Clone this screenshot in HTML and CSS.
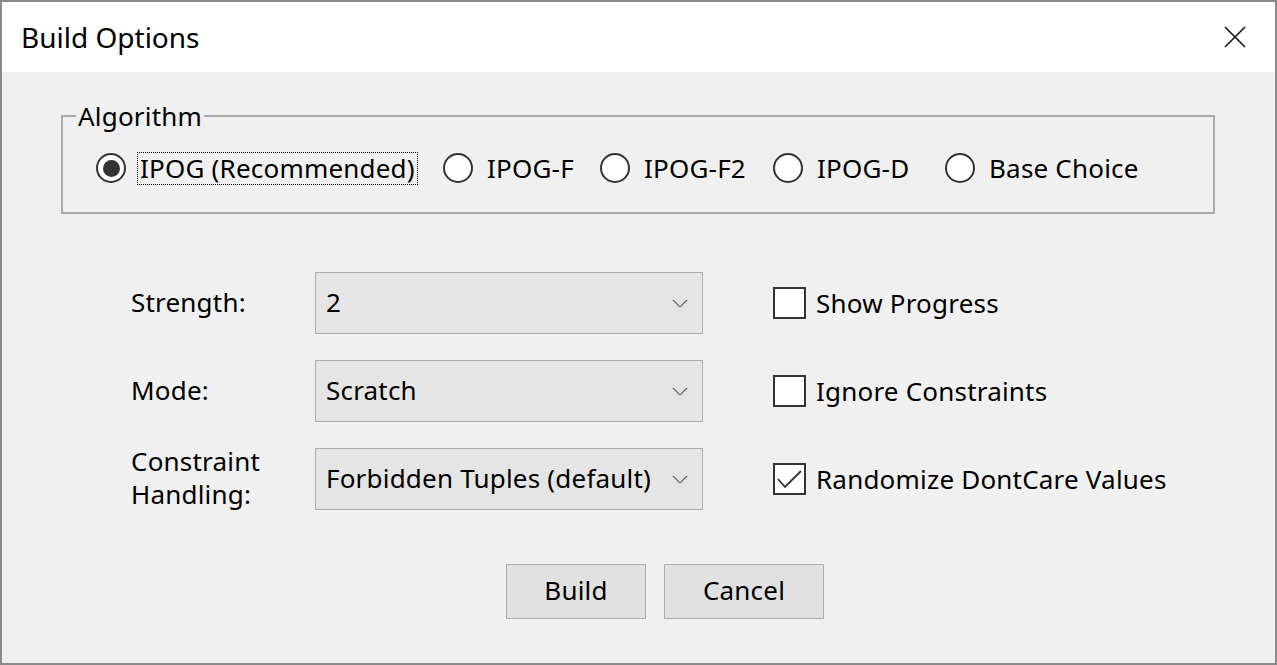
FILE: index.html
```html
<!DOCTYPE html>
<html>
<head>
<meta charset="utf-8">
<link rel="stylesheet" href="styles.css">
</head>
<body>
<div class="window">
  <div class="titlebar">
    <span class="title">Build Options</span>
    <svg class="close" width="22" height="22" viewBox="0 0 22 22"><path d="M1 1 L21 21 M21 1 L1 21" stroke="#111" stroke-width="1.6" fill="none"/></svg>
  </div>
  <div class="content">
    <fieldset class="group">
      <legend class="legend">Algorithm</legend>
      <div class="radios">
        <div class="radio r1"><span class="circle on"></span><span class="rlabel focus">IPOG (Recommended)</span></div>
        <div class="radio r2"><span class="circle"></span><span class="rlabel">IPOG-F</span></div>
        <div class="radio r3"><span class="circle"></span><span class="rlabel">IPOG-F2</span></div>
        <div class="radio r4"><span class="circle"></span><span class="rlabel">IPOG-D</span></div>
        <div class="radio r5"><span class="circle"></span><span class="rlabel">Base Choice</span></div>
      </div>
    </fieldset>
    <div class="form">
      <div class="flabel">Strength:</div>
      <div class="combo"><span>2</span><svg class="chev" width="16" height="9" viewBox="0 0 16 9"><path d="M1 1 L8 8 L15 1" stroke="#666" stroke-width="1.2" fill="none"/></svg></div>
      <div class="check"><span class="box"></span><span>Show Progress</span></div>

      <div class="flabel">Mode:</div>
      <div class="combo"><span>Scratch</span><svg class="chev" width="16" height="9" viewBox="0 0 16 9"><path d="M1 1 L8 8 L15 1" stroke="#666" stroke-width="1.2" fill="none"/></svg></div>
      <div class="check"><span class="box"></span><span>Ignore Constraints</span></div>

      <div class="flabel two">Constraint<br>Handling:</div>
      <div class="combo"><span>Forbidden Tuples (default)</span><svg class="chev" width="16" height="9" viewBox="0 0 16 9"><path d="M1 1 L8 8 L15 1" stroke="#666" stroke-width="1.2" fill="none"/></svg></div>
      <div class="check"><span class="box"><svg width="29" height="29" viewBox="0 0 29 29"><path d="M3 14 L10 22 L26 6" stroke="#333" stroke-width="1.8" fill="none"/></svg></span><span>Randomize DontCare Values</span></div>
    </div>
    <div class="buttons">
      <div class="btn b-build">Build</div>
      <div class="btn b-cancel">Cancel</div>
    </div>
  </div>
</div>
</body>
</html>
```

FILE: styles.css
```css
html, body {
  margin: 0;
  padding: 0;
}
body {
  width: 1277px;
  height: 665px;
  overflow: hidden;
  font-family: "Noto Sans", "Open Sans", sans-serif;
  font-size: 26px;
  letter-spacing: 0.2px;
  color: #000;
  background: #f0f0f0;
}
.window {
  box-sizing: border-box;
  width: 1277px;
  height: 665px;
  border: 2px solid #8a8a8a;
  display: flex;
  flex-direction: column;
  background: #f0f0f0;
}
.titlebar {
  height: 70px;
  flex: none;
  background: #fff;
  display: flex;
  align-items: center;
  justify-content: space-between;
  padding: 0 29px 0 19px;
}
.title {
  font-size: 28px;
  line-height: 30px;
  letter-spacing: 0;
}
.close {
  display: block;
}
.content {
  flex: 1;
  display: flex;
  flex-direction: column;
}
.group {
  margin: 27px 60px 0 59px;
  padding: 0 0 29px 33px;
  border: 2px solid #a9a9a9;
  min-width: 0;
}
.legend {
  margin-left: -20px;
  padding: 0 2px;
  line-height: 34px;
}
.radios {
  display: flex;
  align-items: center;
  margin-top: 20px;
  height: 30px;
}
.radio {
  display: flex;
  align-items: center;
  flex: none;
}
.r1 { width: 347px; }
.r2 { width: 157px; }
.r3 { width: 173px; }
.r4 { width: 172px; }
.circle {
  box-sizing: border-box;
  width: 30px;
  height: 30px;
  border: 2px solid #333;
  border-radius: 50%;
  background: #fff;
  flex: none;
  margin-right: 14px;
  display: flex;
  align-items: center;
  justify-content: center;
}
.circle.on::after {
  content: "";
  width: 17px;
  height: 17px;
  border-radius: 50%;
  background: #333;
}
.rlabel {
  padding: 0 2px;
  line-height: 31px;
  margin-left: -2px;
}
.focus {
  outline: 1px dotted #000;
}
.form {
  display: grid;
  grid-template-columns: 184px 388px auto;
  grid-auto-rows: 62px;
  row-gap: 26px;
  column-gap: 0;
  margin: 58px 0 0 129px;
}
.flabel {
  display: flex;
  align-items: center;
  line-height: 33px;
  padding-bottom: 2px;
}
.combo {
  box-sizing: border-box;
  border: 1px solid #adadad;
  background: #e5e5e5;
  display: flex;
  align-items: center;
  justify-content: space-between;
  padding: 0 14px 2px 10px;
}
.chev {
  display: block;
  margin-top: 2px;
}
.check {
  display: flex;
  align-items: center;
  margin-left: 70px;
}
.box {
  box-sizing: border-box;
  width: 33px;
  height: 32px;
  border: 2px solid #333;
  background: #fff;
  margin-right: 10px;
  flex: none;
  display: flex;
  align-items: center;
  justify-content: center;
}
.box svg {
  display: block;
}
.buttons {
  display: flex;
  gap: 18px;
  margin: 54px 0 0 504px;
}
.btn {
  box-sizing: border-box;
  height: 55px;
  border: 1px solid #adadad;
  background: #e1e1e1;
  display: flex;
  align-items: center;
  justify-content: center;
  padding-bottom: 4px;
}
.b-build { width: 140px; }
.b-cancel { width: 160px; }
```
